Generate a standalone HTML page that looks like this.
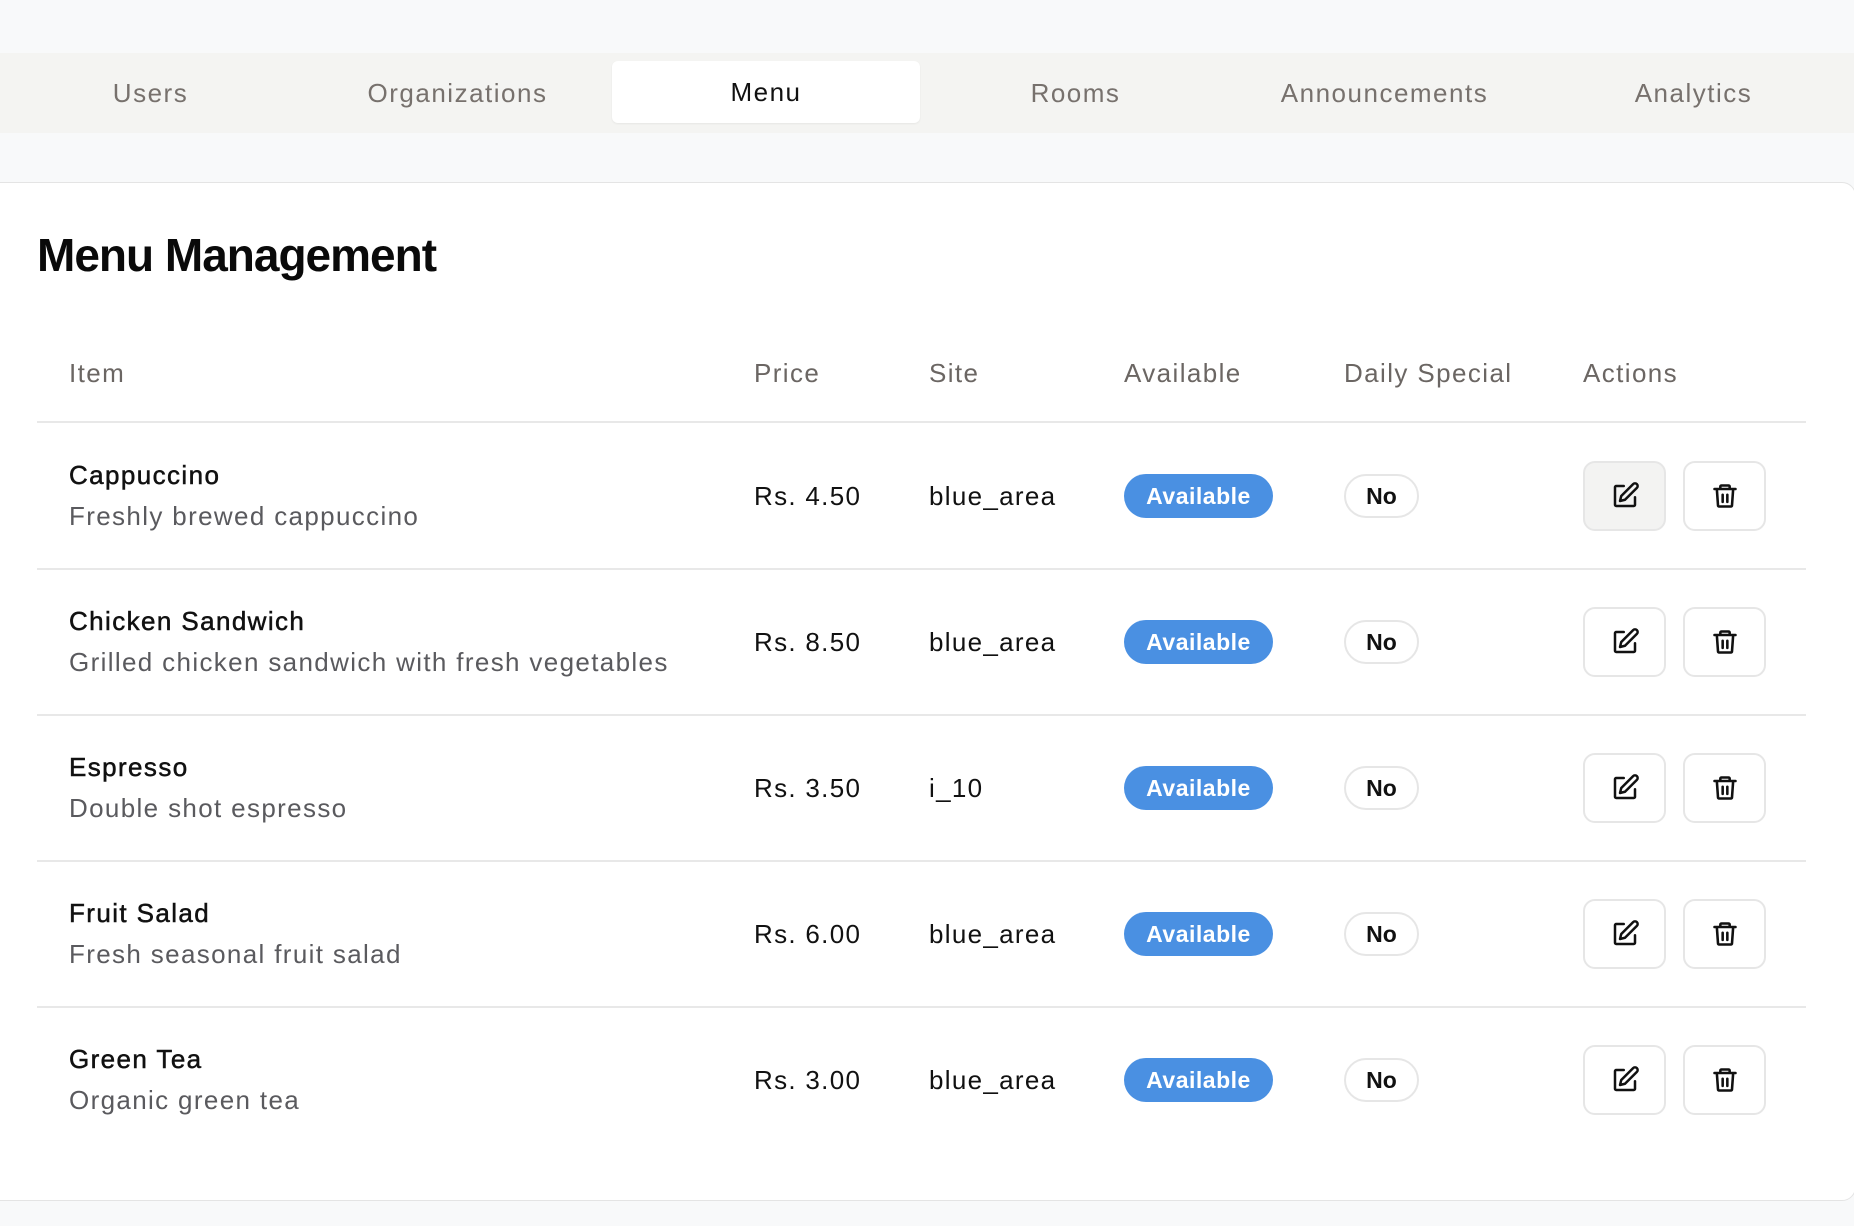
<!DOCTYPE html>
<html><head><meta charset="utf-8"><style>
*{margin:0;padding:0;box-sizing:border-box}
body{width:1854px;height:1226px;background:#f8f9fa;font-family:"Liberation Sans",sans-serif;position:relative;overflow:hidden;color:#111}
.tabs{position:absolute;left:0;top:53px;width:1854px;height:80px;background:#f4f4f2}
.tab{position:absolute;top:0;height:80px;width:309px;line-height:80px;text-align:center;font-size:26px;color:#77716d;letter-spacing:1.5px}
.tab.act{top:8px;height:62px;line-height:62px;background:#fff;color:#111;border-radius:6px;box-shadow:0 1px 2px rgba(0,0,0,.06)}
.card{position:absolute;left:-2px;top:182px;width:1858px;height:1019px;background:#fff;border:1px solid #e4e4e4;border-radius:0 14px 14px 0}
h1{position:absolute;left:37px;top:228px;font-size:46px;font-weight:bold;letter-spacing:-1px;color:#0a0a0a}
.th{position:absolute;top:358px;font-size:26px;color:#6b6663;letter-spacing:1.4px}
.line{position:absolute;left:37px;width:1769px;height:2px;background:#e8e8e8}
.t{position:absolute;font-size:26px;color:#111;letter-spacing:1.3px}
.n{-webkit-text-stroke:0.5px #111;letter-spacing:1.4px}
.d{position:absolute;font-size:26px;color:#5a5a5e;letter-spacing:1.35px}
.av{position:absolute;left:1124px;width:149px;height:44px;border-radius:22px;background:#4a90e2;color:#fff;font-weight:bold;font-size:23px;text-align:center;line-height:44px;letter-spacing:.5px}
.no{position:absolute;left:1344px;width:75px;height:44px;border-radius:22px;border:2px solid #e6e6e6;font-weight:bold;font-size:23px;text-align:center;line-height:40px}
.btn{position:absolute;width:83px;height:70px;border:2px solid #e6e6e6;border-radius:12px;background:#fff;display:flex;align-items:center;justify-content:center}
.btn.g{background:#f3f3f2}
</style></head><body>
<div class="tabs">
<div class="tab" style="left:-4px">Users</div>
<div class="tab" style="left:303px">Organizations</div>
<div class="tab act" style="left:612px;width:308px">Menu</div>
<div class="tab" style="left:921px">Rooms</div>
<div class="tab" style="left:1230px">Announcements</div>
<div class="tab" style="left:1539px">Analytics</div>
</div>
<div class="card"></div>
<h1>Menu Management</h1>
<div class="th" style="left:69px">Item</div>
<div class="th" style="left:754px">Price</div>
<div class="th" style="left:929px">Site</div>
<div class="th" style="left:1124px">Available</div>
<div class="th" style="left:1344px">Daily Special</div>
<div class="th" style="left:1583px">Actions</div>
<div class="line" style="top:421px"></div>
<div class="line" style="top:568px"></div>
<div class="line" style="top:714px"></div>
<div class="line" style="top:860px"></div>
<div class="line" style="top:1006px"></div>

<div class="t n" style="left:69px;top:460px">Cappuccino</div>
<div class="d" style="left:69px;top:501px">Freshly brewed cappuccino</div>
<div class="t" style="left:754px;top:481px">Rs. 4.50</div>
<div class="t" style="left:929px;top:481px">blue_area</div>
<div class="av" style="top:474px">Available</div>
<div class="no" style="top:474px">No</div>

<div class="t n" style="left:69px;top:606px">Chicken Sandwich</div>
<div class="d" style="left:69px;top:647px">Grilled chicken sandwich with fresh vegetables</div>
<div class="t" style="left:754px;top:627px">Rs. 8.50</div>
<div class="t" style="left:929px;top:627px">blue_area</div>
<div class="av" style="top:620px">Available</div>
<div class="no" style="top:620px">No</div>

<div class="t n" style="left:69px;top:752px">Espresso</div>
<div class="d" style="left:69px;top:793px">Double shot espresso</div>
<div class="t" style="left:754px;top:773px">Rs. 3.50</div>
<div class="t" style="left:929px;top:773px">i_10</div>
<div class="av" style="top:766px">Available</div>
<div class="no" style="top:766px">No</div>

<div class="t n" style="left:69px;top:898px">Fruit Salad</div>
<div class="d" style="left:69px;top:939px">Fresh seasonal fruit salad</div>
<div class="t" style="left:754px;top:919px">Rs. 6.00</div>
<div class="t" style="left:929px;top:919px">blue_area</div>
<div class="av" style="top:912px">Available</div>
<div class="no" style="top:912px">No</div>

<div class="t n" style="left:69px;top:1044px">Green Tea</div>
<div class="d" style="left:69px;top:1085px">Organic green tea</div>
<div class="t" style="left:754px;top:1065px">Rs. 3.00</div>
<div class="t" style="left:929px;top:1065px">blue_area</div>
<div class="av" style="top:1058px">Available</div>
<div class="no" style="top:1058px">No</div>

<svg width="0" height="0" style="position:absolute"><defs>
<symbol id="ed" viewBox="0 0 24 24"><path d="M11 4H5a1 1 0 0 0-1 1v14a1 1 0 0 0 1 1h14a1 1 0 0 0 1-1v-6" fill="none" stroke="#111" stroke-width="2" stroke-linecap="round" stroke-linejoin="round"/><path d="M18.5 2.5a2.1 2.1 0 0 1 3 3L12 15l-4 1 1-4z" fill="none" stroke="#111" stroke-width="2" stroke-linejoin="round"/></symbol>
<symbol id="tr" viewBox="0 0 24 24"><path d="M3 6h18M8 6V4a1 1 0 0 1 1-1h6a1 1 0 0 1 1 1v2M5 6l1 14a1 1 0 0 0 1 1h10a1 1 0 0 0 1-1l1-14M10 11v6M14 11v6" fill="none" stroke="#111" stroke-width="2.2" stroke-linecap="round" stroke-linejoin="round"/></symbol>
</defs></svg>
<div class="btn g" style="left:1583px;top:461px"><svg width="30" height="30"><use href="#ed"/></svg></div>
<div class="btn" style="left:1683px;top:461px"><svg width="28" height="28"><use href="#tr"/></svg></div>
<div class="btn" style="left:1583px;top:607px"><svg width="30" height="30"><use href="#ed"/></svg></div>
<div class="btn" style="left:1683px;top:607px"><svg width="28" height="28"><use href="#tr"/></svg></div>
<div class="btn" style="left:1583px;top:753px"><svg width="30" height="30"><use href="#ed"/></svg></div>
<div class="btn" style="left:1683px;top:753px"><svg width="28" height="28"><use href="#tr"/></svg></div>
<div class="btn" style="left:1583px;top:899px"><svg width="30" height="30"><use href="#ed"/></svg></div>
<div class="btn" style="left:1683px;top:899px"><svg width="28" height="28"><use href="#tr"/></svg></div>
<div class="btn" style="left:1583px;top:1045px"><svg width="30" height="30"><use href="#ed"/></svg></div>
<div class="btn" style="left:1683px;top:1045px"><svg width="28" height="28"><use href="#tr"/></svg></div>
</body></html>
